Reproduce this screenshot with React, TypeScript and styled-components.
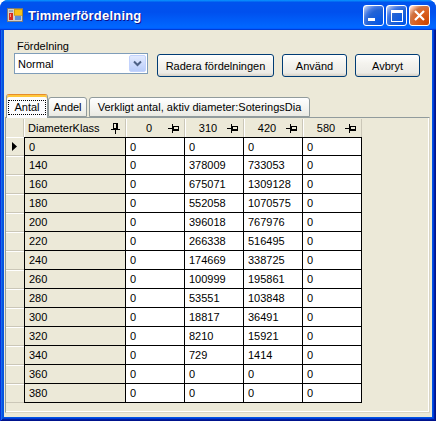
import React from "react";
import styled, { createGlobalStyle } from "styled-components";

const GlobalStyle = createGlobalStyle`
  html, body {
    margin: 0;
    padding: 0;
    background: #ffffff;
    overflow: hidden;
  }
  body {
    font-family: "Liberation Sans", Arial, sans-serif;
    font-size: 11px;
    color: #000;
  }
`;

const Window = styled.div`
  width: 436px;
  height: 421px;
  display: flex;
  flex-direction: column;
  border-radius: 8px 8px 0 0;
  overflow: hidden;
  background: #0054e3;
`;

const TitleBar = styled.div`
  height: 30px;
  flex: none;
  display: flex;
  align-items: center;
  padding: 0 6px 0 7px;
  background: linear-gradient(
    180deg,
    #0997ff,
    #0053ee 8%,
    #0050ee 40%,
    #06f 88%,
    #06f 93%,
    #005bff 95%,
    #003dd7 96%,
    #003dd7
  );
`;

const TitleText = styled.div`
  flex: 1;
  margin-left: 5px;
  color: #fff;
  font-weight: bold;
  font-size: 13px;
  letter-spacing: 0.2px;
  text-shadow: 1px 1px #0f1089;
`;

const CtrlButton = styled.div<{ $close?: boolean }>`
  width: 19px;
  height: 19px;
  margin-left: 2px;
  border: 1px solid #fff;
  border-radius: 3px;
  display: flex;
  align-items: center;
  justify-content: center;
  background: ${(p) =>
    p.$close
      ? "radial-gradient(circle at 90% 90%, #cc4600 0%, #dc6527 55%, #cd7546 70%, #ffccb2 90%, #fff 100%)"
      : "radial-gradient(circle at 90% 90%, #0054e9 0%, #2263d5 55%, #4479e4 70%, #a3bbec 90%, #fff 100%)"};
`;

const Frame = styled.div`
  flex: 1;
  display: flex;
  padding: 0 4px 4px 4px;
  background: #0054e3;
  box-shadow: inset 1px 0 #0831d9, inset -1px -1px #00138c, inset 2px 0 #166aee,
    inset -2px -2px #001ea0, inset 3px 0 #0855dd, inset -3px -3px #003bda;
`;

const Client = styled.div`
  flex: 1;
  display: flex;
  flex-direction: column;
  background: #ece9d8;
  min-height: 0;
`;

const TopArea = styled.div`
  display: flex;
  align-items: flex-start;
  padding: 10px 0 0 10px;
  height: 54px;
`;

const FieldGroup = styled.div`
  display: flex;
  flex-direction: column;
`;

const Label = styled.div`
  height: 13px;
  line-height: 13px;
  margin-left: 3px;
`;

const Combo = styled.div`
  width: 128px;
  height: 19px;
  border: 1px solid #7f9db9;
  background: #fff;
  display: flex;
  align-items: center;
  padding: 0 1px 0 3px;
`;

const ComboText = styled.div`
  flex: 1;
`;

const ComboArrow = styled.div`
  width: 15px;
  height: 15px;
  border: 1px solid #c3d3fd;
  border-radius: 2px;
  background: linear-gradient(180deg, #e2eafe, #b9cdfa);
  display: flex;
  align-items: center;
  justify-content: center;
`;

const ButtonRow = styled.div`
  display: flex;
  gap: 8px;
  margin: 14px 0 0 9px;
`;

const Button = styled.div<{ $w: number }>`
  width: ${(p) => p.$w - 2}px;
  height: 21px;
  border: 1px solid #003c74;
  border-radius: 3px;
  background: linear-gradient(180deg, #fff 0%, #f4f3ee 40%, #ecebe6 85%, #d6d0c5 100%);
  display: flex;
  align-items: center;
  justify-content: center;
`;

const TabStrip = styled.div`
  display: flex;
  align-items: flex-end;
  height: 23px;
  margin: 0 0 0 2px;
  position: relative;
  z-index: 1;
`;

const Tab = styled.div<{ $w: number; $active?: boolean }>`
  width: ${(p) => p.$w - 2}px;
  height: ${(p) => (p.$active ? 22 : 18)}px;
  margin-right: ${(p) => (p.$active ? 0 : 2)}px;
  margin-bottom: ${(p) => (p.$active ? -1 : 0)}px;
  border: 1px solid #919b9c;
  border-bottom: ${(p) => (p.$active ? "none" : "1px solid #919b9c")};
  border-top-color: ${(p) => (p.$active ? "#e68b2c" : "#919b9c")};
  border-radius: 3px 3px 0 0;
  box-shadow: ${(p) => (p.$active ? "inset 0 2px #ffc83c" : "none")};
  background: ${(p) =>
    p.$active ? "#fcfcfe" : "linear-gradient(180deg, #fff, #f3f3ef 60%, #eaeae3)"};
  display: flex;
  align-items: center;
  justify-content: center;
  padding-top: ${(p) => (p.$active ? 1 : 0)}px;
  box-sizing: content-box;
`;

const FocusText = styled.span`
  border: 1px dotted #000;
  padding: 0 5px;
  line-height: 13px;
`;

const Panel = styled.div`
  flex: 1;
  margin: 0 2px 4px 1px;
  border: 1px solid #919b9c;
  border-right-color: #d8d4c4;
  border-bottom-color: #d8d4c4;
  box-shadow: inset -1px -1px #fff;
  padding-top: 1px;
  background: #ece9d8;
  min-height: 0;
`;

const Row = styled.div`
  display: flex;
  height: 19px;
`;

const HeaderRow = styled(Row)`
  height: 18px;
`;

const RowHead = styled.div`
  width: 18px;
  flex: none;
  display: flex;
  align-items: center;
  justify-content: center;
  box-sizing: border-box;
  border-top: 1px solid #fff;
  border-bottom: 1px solid #cbc7b8;
`;

const CornerHead = styled.div`
  width: 18px;
  flex: none;
  box-sizing: border-box;
  border-right: 1px solid #cbc7b8;
`;

const ColHead = styled.div<{ $w: number }>`
  width: ${(p) => p.$w}px;
  flex: none;
  box-sizing: border-box;
  display: flex;
  align-items: center;
  padding: 0 5px 0 4px;
  border-right: 1px solid #cbc7b8;
  box-shadow: inset 1px 0 #fff;
`;

const HeadLabel = styled.div<{ $left?: boolean }>`
  flex: 1;
  text-align: ${(p) => (p.$left ? "left" : "center")};
`;

const Cell = styled.div<{ $w: number; $frozen?: boolean; $first?: boolean; $left?: boolean }>`
  width: ${(p) => p.$w}px;
  flex: none;
  box-sizing: border-box;
  display: flex;
  align-items: center;
  padding-left: 4px;
  background: ${(p) => (p.$frozen ? "#ece9d8" : "#fff")};
  border-right: 1px solid #000;
  border-bottom: 1px solid #000;
  border-top: ${(p) => (p.$first ? "1px solid #000" : "none")};
  border-left: ${(p) => (p.$left ? "1px solid #000" : "none")};
`;

const VertPin = () => (
  <svg width="9" height="11" viewBox="0 0 9 11" shapeRendering="crispEdges">
    <rect x="2.5" y="0.5" width="4" height="5" fill="none" stroke="#000" />
    <rect x="5" y="1" width="1" height="4" fill="#000" />
    <rect x="0" y="6" width="9" height="1" fill="#000" />
    <rect x="4" y="7" width="1" height="4" fill="#000" />
  </svg>
);

const HorzPin = () => (
  <svg width="11" height="9" viewBox="0 0 11 9" shapeRendering="crispEdges">
    <rect x="0" y="4" width="4" height="1" fill="#000" />
    <rect x="4" y="0" width="1" height="9" fill="#000" />
    <rect x="5.5" y="2.5" width="5" height="4" fill="none" stroke="#000" />
    <rect x="6" y="5" width="4" height="1" fill="#000" />
  </svg>
);

const AppIcon = () => (
  <svg width="16" height="16" viewBox="0 0 16 16" shapeRendering="crispEdges">
    <rect x="0.5" y="1.5" width="15" height="13" fill="#d4d0c8" stroke="#7a7a7a" />
    <rect x="2" y="6" width="4" height="7" fill="#d62a20" />
    <rect x="3" y="7" width="1" height="3" fill="#ff9a8a" />
    <rect x="7" y="2" width="8" height="6" fill="#f7c21a" stroke="#b88a00" strokeWidth="0.6" />
    <rect x="8" y="9" width="6" height="4" fill="#5b8fd8" />
    <rect x="2" y="3" width="4" height="2" fill="#9aa7b8" />
  </svg>
);

const DK_W = 101;
const COL_W = 59;

const columns = ["0", "310", "420", "580"];

const rows: [string, string, string, string, string][] = [
  ["0", "0", "0", "0", "0"],
  ["140", "0", "378009", "733053", "0"],
  ["160", "0", "675071", "1309128", "0"],
  ["180", "0", "552058", "1070575", "0"],
  ["200", "0", "396018", "767976", "0"],
  ["220", "0", "266338", "516495", "0"],
  ["240", "0", "174669", "338725", "0"],
  ["260", "0", "100999", "195861", "0"],
  ["280", "0", "53551", "103848", "0"],
  ["300", "0", "18817", "36491", "0"],
  ["320", "0", "8210", "15921", "0"],
  ["340", "0", "729", "1414", "0"],
  ["360", "0", "0", "0", "0"],
  ["380", "0", "0", "0", "0"],
];

const App: React.FC = () => (
  <>
    <GlobalStyle />
    <Window>
      <TitleBar>
        <AppIcon />
        <TitleText>Timmerfördelning</TitleText>
        <CtrlButton>
          <svg width="19" height="19" viewBox="0 0 19 19" shapeRendering="crispEdges">
            <rect x="4" y="12" width="7" height="3" fill="#fff" />
          </svg>
        </CtrlButton>
        <CtrlButton>
          <svg width="19" height="19" viewBox="0 0 19 19" shapeRendering="crispEdges">
            <rect x="4" y="4" width="11" height="11" fill="none" stroke="#fff" strokeWidth="1" />
            <rect x="4" y="4" width="11" height="3" fill="#fff" />
          </svg>
        </CtrlButton>
        <CtrlButton $close>
          <svg width="19" height="19" viewBox="0 0 19 19">
            <path d="M5 5 L14 14 M14 5 L5 14" stroke="#fff" strokeWidth="2.2" />
          </svg>
        </CtrlButton>
      </TitleBar>
      <Frame>
        <Client>
          <TopArea>
            <FieldGroup>
              <Label>Fördelning</Label>
              <Combo>
                <ComboText>Normal</ComboText>
                <ComboArrow>
                  <svg width="9" height="7" viewBox="0 0 9 7">
                    <path d="M1 1.5 L4.5 5 L8 1.5" fill="none" stroke="#4d6185" strokeWidth="2" />
                  </svg>
                </ComboArrow>
              </Combo>
            </FieldGroup>
            <ButtonRow>
              <Button $w={117}>Radera fördelningen</Button>
              <Button $w={65}>Använd</Button>
              <Button $w={65}>Avbryt</Button>
            </ButtonRow>
          </TopArea>
          <TabStrip>
            <Tab $w={42} $active>
              <FocusText>Antal</FocusText>
            </Tab>
            <Tab $w={39}>Andel</Tab>
            <Tab $w={221}>Verkligt antal, aktiv diameter:SoteringsDia</Tab>
          </TabStrip>
          <Panel>
            <HeaderRow>
              <CornerHead />
              <ColHead $w={DK_W + 1}>
                <HeadLabel $left>DiameterKlass</HeadLabel>
                <VertPin />
              </ColHead>
              {columns.map((c) => (
                <ColHead key={c} $w={COL_W}>
                  <HeadLabel>{c}</HeadLabel>
                  <HorzPin />
                </ColHead>
              ))}
            </HeaderRow>
            {rows.map((r, i) => (
              <Row key={r[0]}>
                <RowHead>
                  {i === 0 && (
                    <svg width="6" height="9" viewBox="0 0 6 9">
                      <path d="M0 0 L5 4.5 L0 9 Z" fill="#000" />
                    </svg>
                  )}
                </RowHead>
                <Cell $w={DK_W + 1} $frozen $left $first={i === 0}>
                  {r[0]}
                </Cell>
                {r.slice(1).map((v, j) => (
                  <Cell key={j} $w={COL_W} $first={i === 0}>
                    {v}
                  </Cell>
                ))}
              </Row>
            ))}
          </Panel>
        </Client>
      </Frame>
    </Window>
  </>
);

export default App;
